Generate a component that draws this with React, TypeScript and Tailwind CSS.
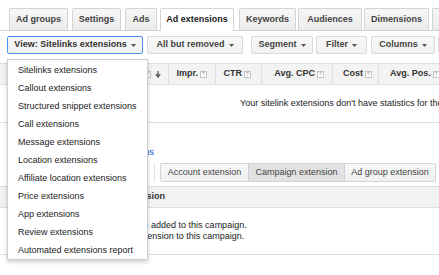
import React from "react";

function Caret() {
  return (
    <svg width="5" height="3" viewBox="0 0 5 3" className="ml-[4px] shrink-0">
      <path d="M0 0h5L2.5 3z" fill="#555" />
    </svg>
  );
}

function Help() {
  return (
    <span className="ml-[2px] flex h-[7px] w-[7px] shrink-0 items-center justify-center border border-[#c4c4c4] bg-white text-[5px] font-normal leading-none text-[#999]">
      ?
    </span>
  );
}

const menuItems = [
  "Sitelinks extensions",
  "Callout extensions",
  "Structured snippet extensions",
  "Call extensions",
  "Message extensions",
  "Location extensions",
  "Affiliate location extensions",
  "Price extensions",
  "App extensions",
  "Review extensions",
  "Automated extensions report",
];

const tabBase =
  "flex h-[22px] shrink-0 items-center justify-center rounded-t-[2px] border border-b-0 border-[#d4d4d4] bg-linear-to-b from-[#f6f6f6] to-[#ececec] font-bold text-[#444]";

const btnBase =
  "flex h-[18px] shrink-0 items-center justify-center rounded-[2px] border border-[#d9d9d9] bg-linear-to-b from-[#f8f8f8] to-[#f0f0f0] font-bold text-[#444]";

export default function App() {
  return (
    <div className="relative h-[275px] w-[439px] overflow-hidden bg-white font-['Liberation_Sans',Arial,sans-serif] text-[9px] text-[#222]">
      {/* Tabs */}
      <div className="flex h-[31px] items-end border-b border-[#d4d4d4]">
        <div className={`${tabBase} ml-[9px] w-[59px]`}>Ad groups</div>
        <div className={`${tabBase} ml-[4px] w-[49px]`}>Settings</div>
        <div className={`${tabBase} ml-[4px] w-[32px]`}>Ads</div>
        <div className="relative z-10 -mb-px ml-[3px] flex h-[23px] w-[74px] shrink-0 items-center justify-center rounded-t-[2px] border border-b-0 border-[#d4d4d4] bg-white pb-px font-bold text-[#222]">
          Ad extensions
        </div>
        <div className={`${tabBase} ml-[5px] w-[57px]`}>Keywords</div>
        <div className={`${tabBase} ml-[2px] w-[64px]`}>Audiences</div>
        <div className={`${tabBase} ml-[2px] w-[65px]`}>Dimensions</div>
        <div className={`${tabBase} ml-[3px] w-[40px]`}></div>
      </div>

      {/* Toolbar */}
      <div className="flex pl-[7px] pt-[5px]">
        <div className="flex h-[18px] w-[136px] shrink-0 items-center justify-center rounded-[2px] border border-[#4d90fe] bg-linear-to-b from-[#f8f8f8] to-[#f0f0f0] font-bold text-[#333]">
          View: Sitelinks extensions
          <Caret />
        </div>
        <div className={`${btnBase} ml-[4px] w-[96px]`}>
          All but removed
          <Caret />
        </div>
        <div className={`${btnBase} ml-[8px] w-[62px]`}>
          Segment
          <Caret />
        </div>
        <div className={`${btnBase} ml-[3px] w-[51px]`}>
          Filter
          <Caret />
        </div>
        <div className={`${btnBase} ml-[4px] w-[64px]`}>
          Columns
          <Caret />
        </div>
        <div className={`${btnBase} ml-[3px] w-[40px]`}></div>
      </div>

      {/* Stats table header */}
      <div className="mt-[9px] flex h-[22px] border-y border-[#e0e0e0] bg-[#f3f3f3] font-bold text-[#333]">
        <div className="flex w-[169px] shrink-0 items-center justify-end border-r border-[#dedede] pr-[7px]">
          Sitelink
          <Help />
          <svg width="6" height="7" viewBox="0 0 6 7" className="ml-[4px]">
            <path d="M3 0v5M0.8 3.2L3 6l2.2-2.8" stroke="#555" strokeWidth="1.3" fill="none" />
          </svg>
        </div>
        <div className="flex w-[47px] shrink-0 items-center justify-end border-r border-[#dedede] pr-[8px]">
          Impr.
          <Help />
        </div>
        <div className="flex w-[46px] shrink-0 items-center justify-end border-r border-[#dedede] pr-[10px]">
          CTR
          <Help />
        </div>
        <div className="flex w-[71px] shrink-0 items-center justify-end border-r border-[#dedede] pr-[8px]">
          Avg. CPC
          <Help />
        </div>
        <div className="flex w-[46px] shrink-0 items-center justify-end border-r border-[#dedede] pr-[6px]">
          Cost
          <Help />
        </div>
        <div className="flex shrink-0 items-center pl-[11px]">
          Avg. Pos.
          <Help />
        </div>
      </div>

      {/* Empty stats message */}
      <div className="flex h-[38px] items-center whitespace-nowrap border-b border-[#dedede] pl-[240px] pt-px text-[#222]">
        Your sitelink extensions don't have statistics for the selected date range.
      </div>

      {/* Link */}
      <div className="mt-[24px] flex h-[11px] w-[154px] items-center justify-end whitespace-nowrap leading-[11px] text-[#1155cc]">
        Learn more about extensions
      </div>

      {/* Level switch */}
      <div className="mt-[5px] flex h-[19px]">
        <div className="h-[19px] w-[155px] shrink-0 border-r border-[#e2e2e2]"></div>
        <div className="ml-[5px] flex h-[19px] shrink-0 rounded-[2px] border border-[#d4d4d4] text-[#444]">
          <div className="flex w-[87px] items-center justify-center bg-linear-to-b from-[#f8f8f8] to-[#f0f0f0]">
            Account extension
          </div>
          <div className="flex w-[97px] items-center justify-center border-x border-[#cfcfcf] bg-[#e2e2e2]">
            Campaign extension
          </div>
          <div className="flex w-[90px] items-center justify-center bg-linear-to-b from-[#f8f8f8] to-[#f0f0f0]">
            Ad group extension
          </div>
        </div>
      </div>

      {/* Extensions table */}
      <div className="mt-[4px] border-t border-[#dedede]">
        <div className="flex h-[21px] items-center border-b border-[#dedede] bg-[#f2f2f2] pl-[122px] font-bold text-[#333]">
          Extension
        </div>
        <div className="whitespace-nowrap border-b border-[#dedede] pb-[12px] pl-[17px] pt-[12px] leading-[11px] text-[#222]">
          <div>No sitelink extensions have been added to this campaign.</div>
          <div>Click "+ Extension" to add an extension to this campaign.</div>
        </div>
      </div>

      {/* Dropdown menu */}
      <div className="absolute left-[7px] top-[59px] h-[201px] w-[141px] border border-[#d0d0d0] bg-white pt-[2px] shadow-[0_2px_4px_rgba(0,0,0,0.2)]">
        {menuItems.map((item) => (
          <div
            key={item}
            className="flex h-[18px] items-center whitespace-nowrap pl-[10px] text-[#222]"
          >
            {item}
          </div>
        ))}
      </div>
    </div>
  );
}
